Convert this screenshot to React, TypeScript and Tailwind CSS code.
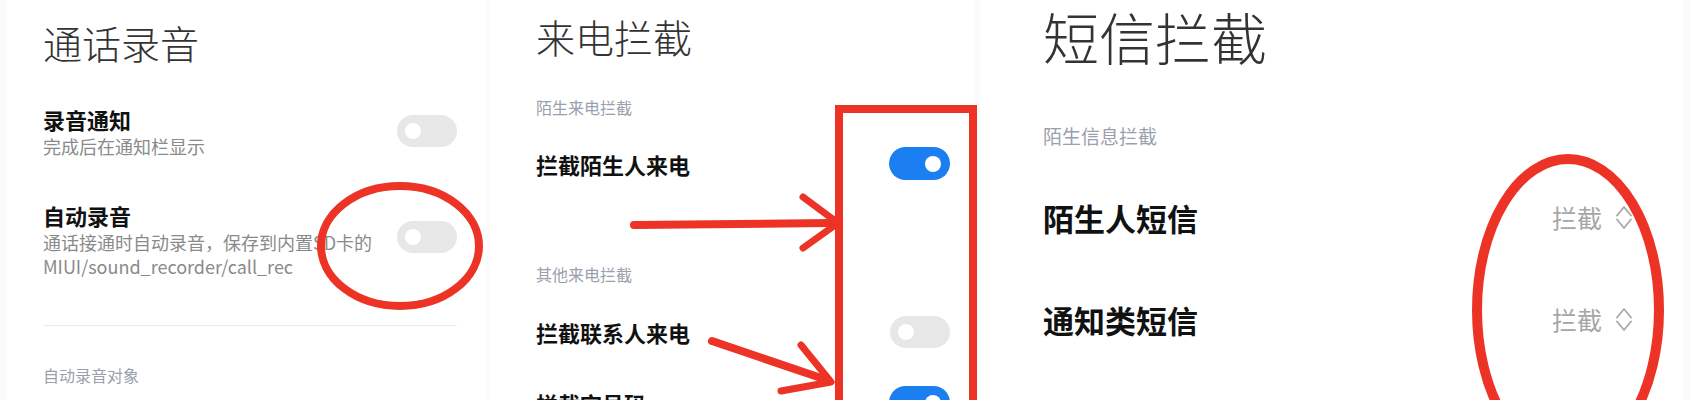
import React from "react";

const FONT = { fontFamily: '"Noto Sans CJK SC", "Noto Sans", sans-serif' };

function Toggle({ on }: { on: boolean }) {
  return (
    <div
      className={
        on
          ? "flex h-[33px] w-[61px] shrink-0 items-center justify-end rounded-full bg-[#1c7ff1] pr-[9px]"
          : "flex h-[32px] w-[60px] shrink-0 items-center justify-start rounded-full bg-[#e7e7e7] pl-[8px]"
      }
    >
      <div className="h-[16px] w-[16px] rounded-full bg-white" />
    </div>
  );
}

function Chevrons() {
  return (
    <svg width="18" height="27" viewBox="0 0 18 27" className="ml-[13px]">
      <path d="M2 11.5 L9 3 L16 11.5" fill="none" stroke="#a8a8a8" strokeWidth="1.8" strokeLinecap="round" strokeLinejoin="round" />
      <path d="M2 15.5 L9 24 L16 15.5" fill="none" stroke="#a8a8a8" strokeWidth="1.8" strokeLinecap="round" strokeLinejoin="round" />
    </svg>
  );
}

export default function App() {
  return (
    <div className="relative flex h-[400px] w-[1691px] overflow-hidden bg-[#fbfbfb]" style={FONT}>
      {/* Panel 1 */}
      <div className="ml-[7px] flex w-[480px] flex-col bg-white pl-[36px] pr-[30px] pt-[20px]">
        <div className="text-[39px] font-light leading-[45px] text-[#333]">通话录音</div>
        <div className="mt-[43px] flex items-start justify-between">
          <div>
            <div className="text-[22px] font-bold leading-none text-[#111]">录音通知</div>
            <div className="mt-[4px] text-[18px] leading-[24px] text-[#8a8a8a]">完成后在通知栏显示</div>
          </div>
          <div className="mt-[7px]">
            <Toggle on={false} />
          </div>
        </div>
        <div className="mt-[46px] flex items-start justify-between">
          <div>
            <div className="text-[22px] font-bold leading-none text-[#111]">自动录音</div>
            <div className="mt-[4px] text-[18px] leading-[24px] text-[#8a8a8a]">
              通话接通时自动录音，保存到内置SD卡的
              <br />
              MIUI/sound_recorder/call_rec
            </div>
          </div>
          <div className="mt-[17px]">
            <Toggle on={false} />
          </div>
        </div>
        <div className="mt-[47px] h-px bg-[#ebebeb]" />
        <div className="mt-[41px] text-[16px] leading-none text-[#9a9fac]">自动录音对象</div>
      </div>

      {/* Panel 2 */}
      <div className="ml-[3px] flex w-[485px] flex-col bg-white pl-[46px] pr-[25px] pt-[14px]">
        <div className="text-[39px] font-light leading-[45px] text-[#333]">来电拦截</div>
        <div className="mt-[40px] text-[16px] leading-none text-[#9a9fae]">陌生来电拦截</div>
        <div className="mt-[32px] flex h-[33px] items-center justify-between">
          <div className="text-[22px] font-bold leading-none text-[#111]">拦截陌生人来电</div>
          <Toggle on={true} />
        </div>
        <div className="mt-[46px] h-px bg-[#e6e6e6]" />
        <div className="mt-[40px] text-[16px] leading-none text-[#9a9fae]">其他来电拦截</div>
        <div className="mt-[34px] flex h-[33px] items-center justify-between">
          <div className="text-[22px] font-bold leading-none text-[#111]">拦截联系人来电</div>
          <Toggle on={false} />
        </div>
        <div className="mt-[38px] flex h-[33px] items-center justify-between">
          <div className="text-[22px] font-bold leading-none text-[#111]">拦截空号码</div>
          <Toggle on={true} />
        </div>
      </div>

      {/* Panel 3 */}
      <div className="ml-[5px] flex w-[703px] flex-col bg-white pl-[63px] pr-[50px] pt-[4px]">
        <div className="text-[56px] font-light leading-[64px] text-[#333]">短信拦截</div>
        <div className="mt-[58px] text-[19px] leading-none text-[#9a9fae]">陌生信息拦截</div>
        <div className="mt-[57px] flex h-[31px] items-center justify-between">
          <div className="text-[31px] font-bold leading-none text-[#111]">陌生人短信</div>
          <div className="flex items-center">
            <span className="text-[25px] leading-none text-[#a6a6a6]">拦截</span>
            <Chevrons />
          </div>
        </div>
        <div className="mt-[71px] flex h-[31px] items-center justify-between">
          <div className="text-[31px] font-bold leading-none text-[#111]">通知类短信</div>
          <div className="flex items-center">
            <span className="text-[25px] leading-none text-[#a6a6a6]">拦截</span>
            <Chevrons />
          </div>
        </div>
      </div>

      {/* Red annotations overlay */}
      <svg className="pointer-events-none absolute left-0 top-0" width="1691" height="400" viewBox="0 0 1691 400">
        <ellipse cx="400" cy="246" rx="79" ry="60" fill="none" stroke="#ec3326" strokeWidth="8" />
        <rect x="839" y="109" width="134" height="320" fill="none" stroke="#ec3326" strokeWidth="8" />
        <path d="M634 225 L830 223" stroke="#ec3326" strokeWidth="8" strokeLinecap="round" />
        <path d="M803 197 L838 223 L803 248" fill="none" stroke="#ec3326" strokeWidth="7" strokeLinecap="round" strokeLinejoin="round" />
        <path d="M712 341 L824 379" stroke="#ec3326" strokeWidth="8" strokeLinecap="round" />
        <path d="M801 345 L831 382 L781 391" fill="none" stroke="#ec3326" strokeWidth="7" strokeLinecap="round" strokeLinejoin="round" />
        <ellipse cx="1568" cy="310" rx="91" ry="151" fill="none" stroke="#ec3326" strokeWidth="10" />
      </svg>
    </div>
  );
}
